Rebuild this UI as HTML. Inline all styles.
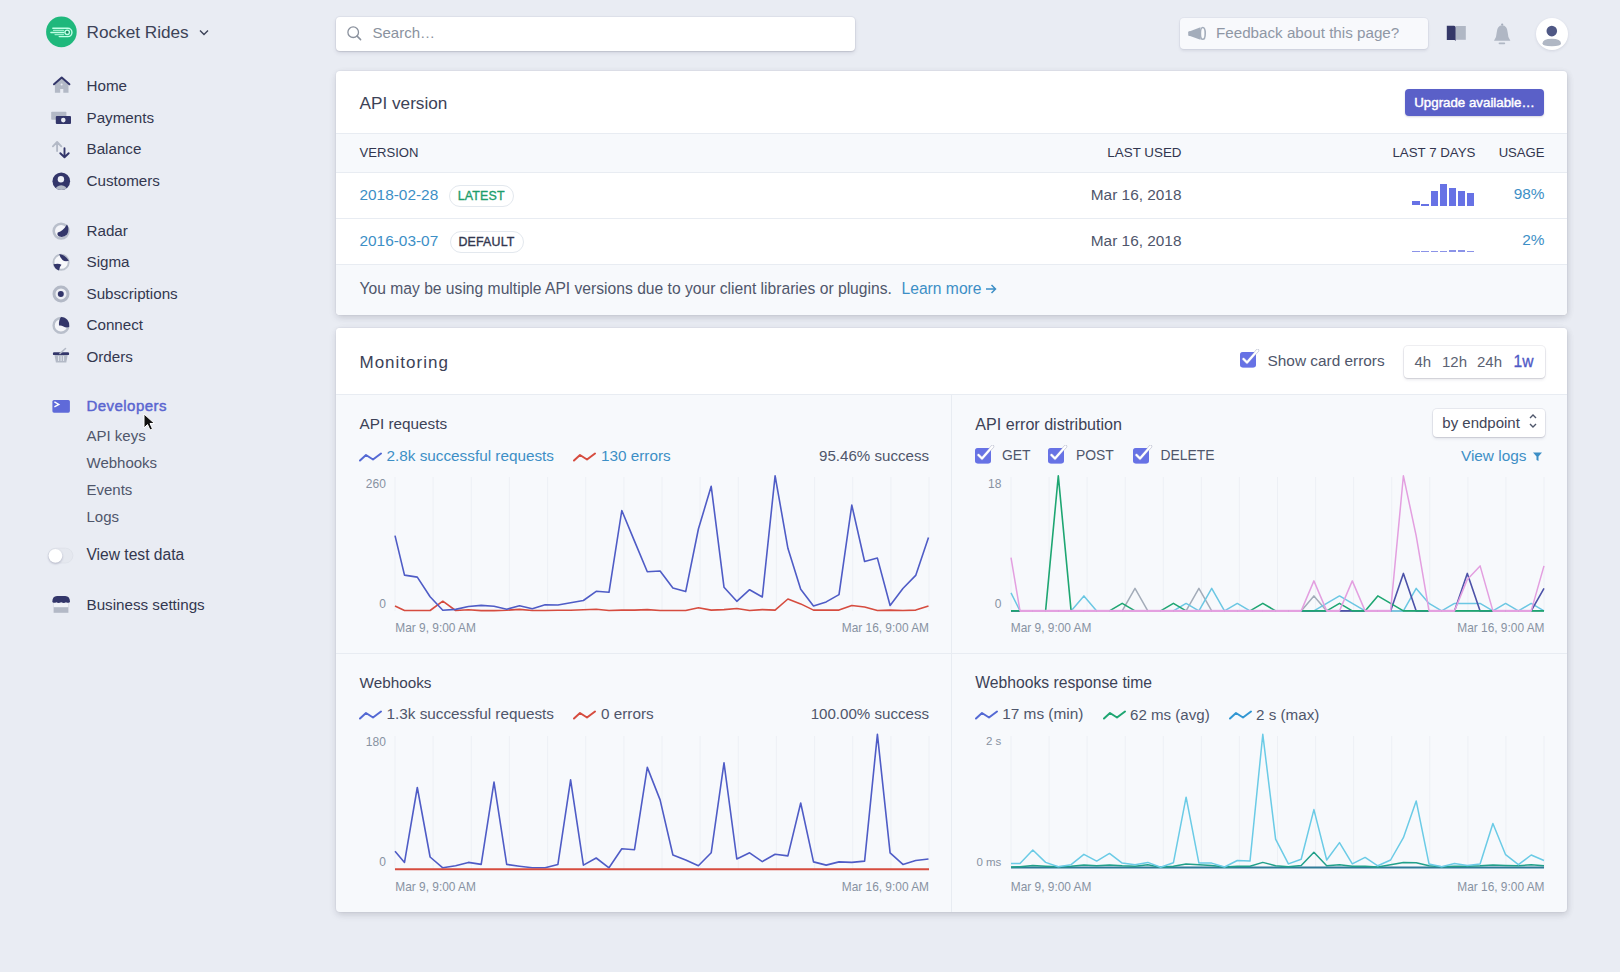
<!DOCTYPE html>
<html><head><meta charset="utf-8"><title>Developers</title>
<style>
html,body{margin:0;padding:0;}
body{width:1620px;height:972px;position:relative;overflow:hidden;background:#e9ecf3;font-family:"Liberation Sans", sans-serif;}
.t{position:absolute;line-height:1;white-space:nowrap;}
</style></head><body>
<svg style="position:absolute;left:44px;top:15px" width="35" height="35" viewBox="0 0 35 35">
<circle cx="17.4" cy="16.9" r="15.3" fill="#1fb87c"/>
<g stroke="#c2ffe6" fill="none" stroke-linecap="round">
<path d="M8.8 13.3 H23.8 A4.15 4.15 0 0 1 23.8 21.6 H15.2" stroke-width="1.4"/>
<path d="M9.5 15.4 H19.5" stroke-width="1.1" opacity=".75"/>
<path d="M6.9 17.5 H19.8" stroke-width="1.4"/>
<path d="M11 19.6 H19.5" stroke-width="1.1" opacity=".75"/>
<circle cx="23.2" cy="17.3" r="2.2" stroke-width="1.3" fill="#178f62"/>
</g>
</svg>
<div class="t" style="left:86.5px;top:23.6px;font-size:17.2px;color:#3c4257;font-weight:400;">Rocket Rides</div>
<svg style="position:absolute;left:198px;top:28px" width="12" height="9" viewBox="0 0 12 9"><path d="M2 2.5 L6 6.5 L10 2.5" stroke="#3c4257" stroke-width="1.4" fill="none"/></svg>
<div class="t" style="left:86.5px;top:77.6px;font-size:15.2px;color:#33374f;font-weight:400;">Home</div>
<div class="t" style="left:86.5px;top:109.6px;font-size:15.2px;color:#33374f;font-weight:400;">Payments</div>
<div class="t" style="left:86.5px;top:141.1px;font-size:15.2px;color:#33374f;font-weight:400;">Balance</div>
<div class="t" style="left:86.5px;top:172.6px;font-size:15.2px;color:#33374f;font-weight:400;">Customers</div>
<div class="t" style="left:86.5px;top:222.6px;font-size:15.2px;color:#33374f;font-weight:400;">Radar</div>
<div class="t" style="left:86.5px;top:254.1px;font-size:15.2px;color:#33374f;font-weight:400;">Sigma</div>
<div class="t" style="left:86.5px;top:285.6px;font-size:15.2px;color:#33374f;font-weight:400;">Subscriptions</div>
<div class="t" style="left:86.5px;top:317.1px;font-size:15.2px;color:#33374f;font-weight:400;">Connect</div>
<div class="t" style="left:86.5px;top:348.6px;font-size:15.2px;color:#33374f;font-weight:400;">Orders</div>
<div class="t" style="left:86.5px;top:398.1px;font-size:15px;color:#5a65d0;font-weight:400;-webkit-text-stroke:0.45px #5a65d0;letter-spacing:0.45px;">Developers</div>
<div class="t" style="left:86.5px;top:427.8px;font-size:15px;color:#4f566b;font-weight:400;">API keys</div>
<div class="t" style="left:86.5px;top:454.8px;font-size:15px;color:#4f566b;font-weight:400;">Webhooks</div>
<div class="t" style="left:86.5px;top:481.8px;font-size:15px;color:#4f566b;font-weight:400;">Events</div>
<div class="t" style="left:86.5px;top:508.8px;font-size:15px;color:#4f566b;font-weight:400;">Logs</div>
<div class="t" style="left:86.5px;top:546.5px;font-size:15.6px;color:#33374f;font-weight:400;">View test data</div>
<div class="t" style="left:86.5px;top:596.6px;font-size:15.2px;color:#33374f;font-weight:400;">Business settings</div>
<svg style="position:absolute;left:0;top:0" width="330" height="640"><path d="M54.9 84 L61.7 77.9 L68.5 84 V92.7 H63.3 V89 H60.2 V92.7 H54.9Z" fill="#b3b9c6"/><path d="M54 84.3 L61.7 77.6 L69.4 84.3" stroke="#33366a" stroke-width="2" fill="none" stroke-linecap="round" stroke-linejoin="round"/><circle cx="61.6" cy="84.6" r="1" fill="#e9ecf3"/><rect x="51.2" y="111.7" width="15.2" height="8.1" rx="0.8" fill="#b3b9c6"/><rect x="55.8" y="116" width="15.2" height="8.1" rx="1" fill="#33366a"/><circle cx="63.3" cy="120.1" r="2.3" fill="#e9ecf3"/><path d="M57.1 151.1 V142.2 M52.9 146.3 L57.1 142 L61.3 146.3" stroke="#b3b9c6" stroke-width="1.9" fill="none" stroke-linecap="round" stroke-linejoin="round"/><path d="M64.5 148.3 V157 M60.3 153.2 L64.5 157.3 L68.7 153.2" stroke="#33366a" stroke-width="1.9" fill="none" stroke-linecap="round" stroke-linejoin="round"/><clipPath id="cc"><circle cx="61.3" cy="181.2" r="8.8"/></clipPath><circle cx="61.3" cy="181.2" r="8.8" fill="#33366a"/><circle cx="60.9" cy="179.2" r="3.2" fill="#eef0f7"/><ellipse cx="61.2" cy="190.5" rx="6" ry="5.2" fill="#b3b9c6" clip-path="url(#cc)"/><circle cx="61.1" cy="231.1" r="7.4" fill="#f4f5f9" stroke="#b9bfcb" stroke-width="2.6"/><path d="M67 224.6 Q70 229.5 67 234.5 Q63.5 238 59.3 236.5 Q56.5 235 57.8 232.5 Q60.5 231.5 62.5 230 Q65 228 67 224.6Z" fill="#33366a"/><circle cx="61.1" cy="262.2" r="7.6" fill="#f7f8fb" stroke="#bcc2cd" stroke-width="1.9"/><path d="M59.3 254 Q65 254.5 68.9 260.8 Q65 262 62.5 260 Q59.8 257.5 59.3 254Z" fill="#33366a"/><path d="M53.5 264.3 Q58.5 263 61.5 264.8 Q59.3 267 59 270.6 Q54.5 269 53.5 264.3Z" fill="#33366a"/><circle cx="61" cy="293.9" r="7" fill="#eef0f5" stroke="#b3b9c6" stroke-width="3"/><circle cx="60.8" cy="293.9" r="3" fill="#33366a"/><circle cx="61" cy="325.4" r="7.4" fill="#f4f5f9" stroke="#b9bfcb" stroke-width="2.4"/><path d="M61 317 A8.4 8.4 0 0 1 69.2 327 Q66 328 63.5 326.5 Q61.2 325 59 325.5 Q58.5 320 61 317Z" fill="#33366a"/><path d="M54.5 355 H67.7 L66.3 362.4 H55.9Z" fill="#b3b9c6"/><path d="M58.6 356 V361 M61.1 356 V361 M63.6 356 V361" stroke="#e9ecf3" stroke-width="0.9"/><rect x="52.9" y="352.2" width="16.2" height="2.9" rx="1.2" fill="#33366a"/><path d="M60 353.5 L65.5 348.5" stroke="#b3b9c6" stroke-width="1.6" stroke-linecap="round"/></svg>
<svg style="position:absolute;left:0;top:380px" width="100" height="250"><rect x="52.4" y="19.9" width="17.5" height="12.8" rx="1.6" fill="#5f6ad9"/><path d="M54.4 21.9 L58.8 24.4 L54.4 26.8" stroke="#fff" stroke-width="1.4" fill="none"/><rect x="48.2" y="168.2" width="24.7" height="14.8" rx="7.4" fill="#e5e8ef" stroke="#dde1e9" stroke-width="0.8"/><circle cx="55.4" cy="175.8" r="6.9" fill="#fff" style="filter:drop-shadow(0 1px 1.2px rgba(50,50,93,.3))"/><rect x="53.6" y="222" width="14.8" height="10.8" fill="#b3b9c6"/><rect x="53.6" y="222" width="14.8" height="5.2" fill="#f1f3f8"/><path d="M52.3 222 Q52.3 216 57 216 H65.3 Q70 216 70 222 Q68 223.6 66 222.2 Q64 223.8 61.2 222.2 Q58.4 223.8 56.3 222.2 Q54.3 223.6 52.3 222Z" fill="#33366a"/></svg>
<svg style="position:absolute;left:143px;top:413px" width="14" height="20" viewBox="0 0 14 20"><path d="M1 1 L1 15 L4.5 11.5 L7 17 L9.5 16 L7 10.5 L11.5 10.5 Z" fill="#111" stroke="#fff" stroke-width="1"/></svg>
<div style="position:absolute;left:336px;top:16.5px;width:519px;height:34px;background:#fff;border-radius:4px;box-shadow:0 0 0 1px rgba(50,50,93,.05),0 2px 4px rgba(50,50,93,.12),0 1px 1.5px rgba(0,0,0,.08)"></div>
<svg style="position:absolute;left:346px;top:25px" width="17" height="17" viewBox="0 0 17 17"><circle cx="7.2" cy="7.2" r="5.3" stroke="#8a919d" stroke-width="1.3" fill="none"/><path d="M11.1 11.1 L14.6 14.6" stroke="#8a919d" stroke-width="1.5" stroke-linecap="round"/></svg>
<div class="t" style="left:372.5px;top:24.8px;font-size:15px;color:#8a929e;font-weight:400;">Search…</div>
<div style="position:absolute;left:1179.5px;top:17.5px;width:248px;height:31.5px;background:#f8f9fc;border-radius:4px;box-shadow:0 0 0 1px rgba(50,50,93,.04),0 2px 3px rgba(50,50,93,.1)"></div>
<svg style="position:absolute;left:1180px;top:20px" width="32" height="26"><path d="M9.3 11.4 L20.5 7.2 V19.8 L9.3 15.8Z" fill="#a4adbb"/><rect x="8.2" y="11.2" width="2.5" height="4.8" rx="1" fill="#a4adbb"/><ellipse cx="22.8" cy="13.4" rx="2.4" ry="5.9" fill="#fafbfd" stroke="#a4adbb" stroke-width="1.6"/></svg>
<div class="t" style="left:1216.0px;top:25.4px;font-size:15.2px;color:#8f97a5;font-weight:400;">Feedback about this page?</div>
<svg style="position:absolute;left:1440px;top:18px" width="30" height="28"><path d="M6.8 7.7 H14 Q15.7 7.7 15.7 9.5 V23 L14.6 22 H6.8Z" fill="#353868"/><path d="M15.9 8 H25.8 V21.8 H15.9Z" fill="#b0b7c4"/></svg>
<svg style="position:absolute;left:1490px;top:18px" width="24" height="30"><path d="M12.2 7.3 Q17.2 7.8 17.6 14 Q17.8 19.5 20.4 22.8 H4 Q6.6 19.5 6.8 14 Q7.2 7.8 12.2 7.3Z" fill="#b0b7c4"/><circle cx="12.2" cy="6.5" r="1.1" fill="#a4adbb"/><path d="M9.5 25.3 H14.3" stroke="#b0b7c4" stroke-width="1.8" stroke-linecap="round"/></svg>
<div style="position:absolute;left:1535.5px;top:17.5px;width:32px;height:32px;background:#fff;border-radius:50%;box-shadow:0 1px 3px rgba(50,50,93,.12)"></div>
<svg style="position:absolute;left:1535.5px;top:17.5px" width="32" height="32" viewBox="0 0 32 32"><circle cx="15.8" cy="13.1" r="5.3" fill="#4f5885"/><path d="M6.5 25.5 Q6.5 20.8 15.8 20.8 Q25 20.8 25 25.5 Q25 28.2 15.8 28.2 Q6.5 28.2 6.5 25.5Z" fill="#b0b7c4"/></svg>
<div style="position:absolute;left:336px;top:71px;width:1231px;height:243.5px;background:#fff;border-radius:4px;overflow:hidden;box-shadow:0 0 0 1px rgba(50,50,93,.03),1px 2px 6px rgba(0,0,0,.1),0 3px 9px rgba(50,50,93,.08)"></div>
<div class="t" style="left:359.5px;top:94.6px;font-size:17.2px;color:#3c4257;font-weight:400;">API version</div>
<div style="position:absolute;left:1405px;top:89px;width:139px;height:26.5px;background:#5a60c8;border-radius:4px;box-shadow:0 1px 2px rgba(50,50,93,.2)"></div>
<div class="t" style="left:1474.5px;top:95.5px;font-size:13.3px;color:#fff;font-weight:400;transform:translateX(-50%);-webkit-text-stroke:0.45px #fff;">Upgrade available…</div>
<div style="position:absolute;left:336px;top:132.5px;width:1231px;height:40px;background:#f7f9fc;border-top:1px solid #e8ecf2;border-bottom:1px solid #e8ecf2;box-sizing:border-box"></div>
<div class="t" style="left:359.5px;top:146.2px;font-size:13.1px;color:#32364f;font-weight:400;">VERSION</div>
<div class="t" style="right:438.5px;top:145.9px;font-size:13.4px;color:#32364f;font-weight:400;">LAST USED</div>
<div class="t" style="right:144.5px;top:146.0px;font-size:13.3px;color:#32364f;font-weight:400;">LAST 7 DAYS</div>
<div class="t" style="right:75.5px;top:146.2px;font-size:13.1px;color:#32364f;font-weight:400;">USAGE</div>
<div style="position:absolute;left:336px;top:218px;width:1231px;height:1px;background:#e8ecf2"></div>
<div style="position:absolute;left:336px;top:264px;width:1231px;height:1px;background:#e8ecf2"></div>
<div class="t" style="left:359.5px;top:187.2px;font-size:15.4px;color:#3d8fc6;font-weight:400;">2018-02-28</div>
<div style="position:absolute;left:449px;top:185px;width:64.5px;height:22px;border:1px solid #e3e8ee;border-radius:11px;box-sizing:border-box;background:#fff"></div>
<div class="t" style="left:481.2px;top:189.7px;font-size:12.4px;color:#1d9d6c;font-weight:400;transform:translateX(-50%);-webkit-text-stroke:0.35px #1d9d6c;letter-spacing:0.2px;">LATEST</div>
<div class="t" style="left:359.5px;top:233.2px;font-size:15.4px;color:#3d8fc6;font-weight:400;">2016-03-07</div>
<div style="position:absolute;left:449.5px;top:231px;width:74px;height:22px;border:1px solid #e3e8ee;border-radius:11px;box-sizing:border-box;background:#fff"></div>
<div class="t" style="left:486.5px;top:235.7px;font-size:12.4px;color:#33374f;font-weight:400;transform:translateX(-50%);-webkit-text-stroke:0.35px #33374f;letter-spacing:0.2px;">DEFAULT</div>
<div class="t" style="right:438.5px;top:187.2px;font-size:15.4px;color:#4f566b;font-weight:400;">Mar 16, 2018</div>
<div class="t" style="right:438.5px;top:233.2px;font-size:15.4px;color:#4f566b;font-weight:400;">Mar 16, 2018</div>
<div class="t" style="right:75.5px;top:186.4px;font-size:15.4px;color:#3d8fc6;font-weight:400;">98%</div>
<div class="t" style="right:75.5px;top:232.4px;font-size:15.4px;color:#3d8fc6;font-weight:400;">2%</div>
<div style="position:absolute;left:1412.3px;top:200.8px;width:7.5px;height:4.7px;background:#6772e5"></div>
<div style="position:absolute;left:1421.4px;top:203.5px;width:7.5px;height:2px;background:#6772e5"></div>
<div style="position:absolute;left:1430.5px;top:190.5px;width:7.5px;height:15px;background:#6772e5"></div>
<div style="position:absolute;left:1439.6px;top:183.5px;width:7.5px;height:22px;background:#6772e5"></div>
<div style="position:absolute;left:1448.7px;top:187.5px;width:7.5px;height:18px;background:#6772e5"></div>
<div style="position:absolute;left:1457.8px;top:190.5px;width:7.5px;height:15px;background:#6772e5"></div>
<div style="position:absolute;left:1466.9px;top:192.5px;width:7.5px;height:13px;background:#6772e5"></div>
<div style="position:absolute;left:1412.3px;top:250.7px;width:7.5px;height:1.3px;background:#8b93e8"></div>
<div style="position:absolute;left:1421.4px;top:250.7px;width:7.5px;height:1.3px;background:#8b93e8"></div>
<div style="position:absolute;left:1430.5px;top:250.7px;width:7.5px;height:1.3px;background:#8b93e8"></div>
<div style="position:absolute;left:1439.6px;top:250.7px;width:7.5px;height:1.3px;background:#8b93e8"></div>
<div style="position:absolute;left:1448.7px;top:250px;width:7.5px;height:2px;background:#8b93e8"></div>
<div style="position:absolute;left:1457.8px;top:250px;width:7.5px;height:2px;background:#8b93e8"></div>
<div style="position:absolute;left:1466.9px;top:250.7px;width:7.5px;height:1.3px;background:#8b93e8"></div>
<div style="position:absolute;left:336px;top:265px;width:1231px;height:49.5px;background:#f7f9fc;border-radius:0 0 4px 4px"></div>
<div class="t" style="left:359.5px;top:280.7px;font-size:15.65px;color:#4f566b;font-weight:400;">You may be using multiple API versions due to your client libraries or plugins.</div>
<div class="t" style="left:901.5px;top:280.7px;font-size:15.65px;color:#3d8fc6;font-weight:400;">Learn more</div>
<svg style="position:absolute;left:984px;top:282px" width="14" height="14" viewBox="0 0 14 14"><path d="M2 7 H11.5 M7.5 3 L11.5 7 L7.5 11" stroke="#3d8fc6" stroke-width="1.5" fill="none"/></svg>
<div style="position:absolute;left:336px;top:327.5px;width:1231px;height:584.5px;background:#f7f9fc;border-radius:4px;overflow:hidden;box-shadow:0 0 0 1px rgba(50,50,93,.03),1px 2px 6px rgba(0,0,0,.1),0 3px 9px rgba(50,50,93,.08)"></div>
<div style="position:absolute;left:336px;top:327.5px;width:1231px;height:66.5px;background:#fff;border-radius:4px 4px 0 0;border-bottom:1px solid #e8ecf2;box-sizing:content-box"></div>
<div class="t" style="left:359.5px;top:353.8px;font-size:17px;color:#3c4257;font-weight:400;letter-spacing:1.0px;">Monitoring</div>
<svg style="position:absolute;left:1240px;top:349px" width="20" height="19" viewBox="0 0 20 19"><rect x="0" y="3" width="16" height="15.5" rx="3" fill="#6772e5"/><path d="M3.5 10 L7 13.5 L17.5 1.5" stroke="#aeb2c6" stroke-width="3.4" fill="none" stroke-linecap="round" stroke-linejoin="round" opacity=".8"/><rect x="0" y="3" width="16" height="15.5" rx="3" fill="#6772e5" opacity=".55"/><path d="M3.5 10 L7 13.5 L17.5 1.5" stroke="#fff" stroke-width="2.2" fill="none" stroke-linecap="round" stroke-linejoin="round"/></svg>
<div class="t" style="left:1267.5px;top:352.9px;font-size:15.4px;color:#4f566b;font-weight:400;">Show card errors</div>
<div style="position:absolute;left:1404px;top:345.5px;width:140.5px;height:32.5px;background:#fff;border-radius:4px;box-shadow:0 0 0 1px rgba(50,50,93,.08),0 2px 3px rgba(50,50,93,.1),0 1px 1px rgba(0,0,0,.06)"></div>
<div class="t" style="left:1414.5px;top:354.1px;font-size:15px;color:#5b6273;font-weight:400;">4h</div>
<div class="t" style="left:1442.0px;top:354.1px;font-size:15px;color:#5b6273;font-weight:400;">12h</div>
<div class="t" style="left:1477.0px;top:354.1px;font-size:15px;color:#5b6273;font-weight:400;">24h</div>
<div class="t" style="left:1513.5px;top:353.5px;font-size:15.6px;color:#5059c6;font-weight:400;-webkit-text-stroke:0.3px #5059c6;">1w</div>
<div style="position:absolute;left:951px;top:394.5px;width:1px;height:517.5px;background:#e8ecf2"></div>
<div style="position:absolute;left:336px;top:652.5px;width:1231px;height:1px;background:#e8ecf2"></div>
<div class="t" style="left:359.5px;top:416.3px;font-size:15.3px;color:#3c4257;font-weight:400;">API requests</div>
<svg style="position:absolute;left:359px;top:451.5px" width="23" height="10" viewBox="0 0 23 10"><path d="M1 8.5 L7 3 L14 7.5 L22 1.5" stroke="#5469d4" stroke-width="2" fill="none" stroke-linecap="round" stroke-linejoin="round"/></svg>
<div class="t" style="left:386.5px;top:447.7px;font-size:15.3px;color:#3d8fc6;font-weight:400;">2.8k successful requests</div>
<svg style="position:absolute;left:573px;top:451.5px" width="23" height="10" viewBox="0 0 23 10"><path d="M1 8.5 L7 3 L14 7.5 L22 1.5" stroke="#d64c3f" stroke-width="2" fill="none" stroke-linecap="round" stroke-linejoin="round"/></svg>
<div class="t" style="left:601.0px;top:447.7px;font-size:15.3px;color:#3d8fc6;font-weight:400;">130 errors</div>
<div class="t" style="right:691.0px;top:447.9px;font-size:15.1px;color:#4f566b;font-weight:400;">95.46% success</div>
<div class="t" style="right:1234.2px;top:477.6px;font-size:12px;color:#8792a2;font-weight:400;">260</div>
<div class="t" style="right:1234.2px;top:597.6px;font-size:12px;color:#8792a2;font-weight:400;">0</div>
<div class="t" style="left:395.3px;top:623.3px;font-size:11.9px;color:#8792a2;font-weight:400;">Mar 9, 9:00 AM</div>
<div class="t" style="right:691.0px;top:623.3px;font-size:11.9px;color:#8792a2;font-weight:400;">Mar 16, 9:00 AM</div>
<svg style="position:absolute;left:0;top:0;overflow:visible" width="1620" height="972"><line x1="395.0" y1="477" x2="395.0" y2="611" stroke="#edf0f5" stroke-width="1"/><line x1="433.1" y1="477" x2="433.1" y2="611" stroke="#edf0f5" stroke-width="1"/><line x1="471.3" y1="477" x2="471.3" y2="611" stroke="#edf0f5" stroke-width="1"/><line x1="509.4" y1="477" x2="509.4" y2="611" stroke="#edf0f5" stroke-width="1"/><line x1="547.6" y1="477" x2="547.6" y2="611" stroke="#edf0f5" stroke-width="1"/><line x1="585.7" y1="477" x2="585.7" y2="611" stroke="#edf0f5" stroke-width="1"/><line x1="623.9" y1="477" x2="623.9" y2="611" stroke="#edf0f5" stroke-width="1"/><line x1="662.0" y1="477" x2="662.0" y2="611" stroke="#edf0f5" stroke-width="1"/><line x1="700.1" y1="477" x2="700.1" y2="611" stroke="#edf0f5" stroke-width="1"/><line x1="738.3" y1="477" x2="738.3" y2="611" stroke="#edf0f5" stroke-width="1"/><line x1="776.4" y1="477" x2="776.4" y2="611" stroke="#edf0f5" stroke-width="1"/><line x1="814.6" y1="477" x2="814.6" y2="611" stroke="#edf0f5" stroke-width="1"/><line x1="852.7" y1="477" x2="852.7" y2="611" stroke="#edf0f5" stroke-width="1"/><line x1="890.9" y1="477" x2="890.9" y2="611" stroke="#edf0f5" stroke-width="1"/><line x1="929.0" y1="477" x2="929.0" y2="611" stroke="#edf0f5" stroke-width="1"/><polyline points="395.0,606.0 404.5,610.5 417.3,610.5 430.1,610.5 442.8,601.2 455.6,610.5 468.4,609.7 481.2,610.6 494.0,610.6 506.7,610.2 519.5,609.4 532.3,610.5 545.1,610.5 557.9,610.3 570.6,610.3 583.4,609.8 596.2,609.3 609.0,610.5 621.8,610.1 634.5,610.1 647.3,609.6 660.1,610.5 672.9,610.5 685.7,610.5 698.4,607.8 711.2,610.1 724.0,609.6 736.8,608.5 749.6,610.5 762.3,609.6 775.1,610.1 787.9,599.0 800.7,603.9 813.5,610.1 826.2,610.1 839.0,610.1 851.8,605.5 864.6,607.0 877.4,610.5 890.1,610.1 902.9,610.5 915.7,610.1 928.5,605.9" stroke="#d64c3f" stroke-width="1.6" fill="none" stroke-linejoin="round"/><polyline points="395.0,535.6 404.5,575.1 417.3,577.1 430.1,596.8 442.8,610.2 455.6,609.4 468.4,606.5 481.2,605.4 494.0,606.2 506.7,609.2 519.5,605.7 532.3,608.7 545.1,604.7 557.9,605.0 570.6,602.7 583.4,600.5 596.2,591.3 609.0,592.3 621.8,510.5 634.5,541.1 647.3,571.8 660.1,571.0 672.9,588.0 685.7,591.6 698.4,529.0 711.2,486.3 724.0,587.2 736.8,601.3 749.6,589.7 762.3,597.0 775.1,475.8 787.9,548.3 800.7,589.2 813.5,605.9 826.2,601.9 839.0,594.6 851.8,505.1 864.6,561.5 877.4,558.1 890.1,605.5 902.9,588.5 915.7,575.4 928.5,537.5" stroke="#4f5cc6" stroke-width="1.6" fill="none" stroke-linejoin="round"/></svg>
<div class="t" style="left:975.3px;top:415.9px;font-size:16.1px;color:#3c4257;font-weight:400;">API error distribution</div>
<div style="position:absolute;left:1432.5px;top:408.5px;width:112px;height:28px;background:#fff;border-radius:4px;box-shadow:0 0 0 1px rgba(50,50,93,.08),0 2px 3px rgba(50,50,93,.1),0 1px 1px rgba(0,0,0,.06)"></div>
<div class="t" style="left:1442.3px;top:415.2px;font-size:15px;color:#3f4558;font-weight:400;">by endpoint</div>
<svg style="position:absolute;left:1528px;top:413px" width="10" height="16" viewBox="0 0 10 16"><path d="M2 5 L5 2 L8 5 M2 11 L5 14 L8 11" stroke="#4f566b" stroke-width="1.4" fill="none"/></svg>
<svg style="position:absolute;left:974.5px;top:445px" width="20" height="19" viewBox="0 0 20 19"><rect x="0" y="3" width="16" height="15.5" rx="3" fill="#6772e5"/><path d="M3.5 10 L7 13.5 L17.5 1.5" stroke="#aeb2c6" stroke-width="3.4" fill="none" stroke-linecap="round" stroke-linejoin="round" opacity=".8"/><rect x="0" y="3" width="16" height="15.5" rx="3" fill="#6772e5" opacity=".55"/><path d="M3.5 10 L7 13.5 L17.5 1.5" stroke="#fff" stroke-width="2.2" fill="none" stroke-linecap="round" stroke-linejoin="round"/></svg>
<div class="t" style="left:1002.0px;top:448.9px;font-size:13.9px;color:#4f566b;font-weight:400;">GET</div>
<svg style="position:absolute;left:1048px;top:445px" width="20" height="19" viewBox="0 0 20 19"><rect x="0" y="3" width="16" height="15.5" rx="3" fill="#6772e5"/><path d="M3.5 10 L7 13.5 L17.5 1.5" stroke="#aeb2c6" stroke-width="3.4" fill="none" stroke-linecap="round" stroke-linejoin="round" opacity=".8"/><rect x="0" y="3" width="16" height="15.5" rx="3" fill="#6772e5" opacity=".55"/><path d="M3.5 10 L7 13.5 L17.5 1.5" stroke="#fff" stroke-width="2.2" fill="none" stroke-linecap="round" stroke-linejoin="round"/></svg>
<div class="t" style="left:1076.0px;top:448.9px;font-size:13.9px;color:#4f566b;font-weight:400;">POST</div>
<svg style="position:absolute;left:1133px;top:445px" width="20" height="19" viewBox="0 0 20 19"><rect x="0" y="3" width="16" height="15.5" rx="3" fill="#6772e5"/><path d="M3.5 10 L7 13.5 L17.5 1.5" stroke="#aeb2c6" stroke-width="3.4" fill="none" stroke-linecap="round" stroke-linejoin="round" opacity=".8"/><rect x="0" y="3" width="16" height="15.5" rx="3" fill="#6772e5" opacity=".55"/><path d="M3.5 10 L7 13.5 L17.5 1.5" stroke="#fff" stroke-width="2.2" fill="none" stroke-linecap="round" stroke-linejoin="round"/></svg>
<div class="t" style="left:1160.5px;top:448.9px;font-size:13.9px;color:#4f566b;font-weight:400;">DELETE</div>
<div class="t" style="right:93.5px;top:447.9px;font-size:15.4px;color:#3d8fc6;font-weight:400;">View logs</div>
<svg style="position:absolute;left:1532px;top:451px" width="11" height="11" viewBox="0 0 11 11"><path d="M1 1.5 H10 L6.5 5.5 V10 L4.5 9 V5.5Z" fill="#3d8fc6"/></svg>
<div class="t" style="right:618.7px;top:477.6px;font-size:12px;color:#8792a2;font-weight:400;">18</div>
<div class="t" style="right:618.7px;top:597.6px;font-size:12px;color:#8792a2;font-weight:400;">0</div>
<div class="t" style="left:1010.8px;top:623.3px;font-size:11.9px;color:#8792a2;font-weight:400;">Mar 9, 9:00 AM</div>
<div class="t" style="right:75.5px;top:623.3px;font-size:11.9px;color:#8792a2;font-weight:400;">Mar 16, 9:00 AM</div>
<svg style="position:absolute;left:0;top:0;overflow:visible" width="1620" height="972"><line x1="1011.0" y1="477" x2="1011.0" y2="611" stroke="#edf0f5" stroke-width="1"/><line x1="1049.1" y1="477" x2="1049.1" y2="611" stroke="#edf0f5" stroke-width="1"/><line x1="1087.1" y1="477" x2="1087.1" y2="611" stroke="#edf0f5" stroke-width="1"/><line x1="1125.2" y1="477" x2="1125.2" y2="611" stroke="#edf0f5" stroke-width="1"/><line x1="1163.3" y1="477" x2="1163.3" y2="611" stroke="#edf0f5" stroke-width="1"/><line x1="1201.4" y1="477" x2="1201.4" y2="611" stroke="#edf0f5" stroke-width="1"/><line x1="1239.4" y1="477" x2="1239.4" y2="611" stroke="#edf0f5" stroke-width="1"/><line x1="1277.5" y1="477" x2="1277.5" y2="611" stroke="#edf0f5" stroke-width="1"/><line x1="1315.6" y1="477" x2="1315.6" y2="611" stroke="#edf0f5" stroke-width="1"/><line x1="1353.6" y1="477" x2="1353.6" y2="611" stroke="#edf0f5" stroke-width="1"/><line x1="1391.7" y1="477" x2="1391.7" y2="611" stroke="#edf0f5" stroke-width="1"/><line x1="1429.8" y1="477" x2="1429.8" y2="611" stroke="#edf0f5" stroke-width="1"/><line x1="1467.9" y1="477" x2="1467.9" y2="611" stroke="#edf0f5" stroke-width="1"/><line x1="1505.9" y1="477" x2="1505.9" y2="611" stroke="#edf0f5" stroke-width="1"/><line x1="1544.0" y1="477" x2="1544.0" y2="611" stroke="#edf0f5" stroke-width="1"/><polyline points="1011.0,610.9 1020.0,610.9 1032.8,610.9 1045.6,610.9 1058.3,610.9 1071.1,610.9 1083.9,610.9 1096.7,610.9 1109.5,610.9 1122.2,610.9 1135.0,588.4 1147.8,610.9 1160.6,610.9 1173.4,610.9 1186.1,610.9 1198.9,588.4 1211.7,610.9 1224.5,610.9 1237.3,610.9 1250.0,610.9 1262.8,610.9 1275.6,610.9 1288.4,610.9 1301.2,610.9 1313.9,595.9 1326.7,610.9 1339.5,610.9 1352.3,610.9 1365.1,610.9 1377.8,610.9 1390.6,610.9 1403.4,610.9 1416.2,610.9 1429.0,610.9 1441.7,610.9 1454.5,610.9 1467.3,610.9 1480.1,610.9 1492.9,610.9 1505.6,610.9 1518.4,610.9 1531.2,610.9 1544.0,610.9" stroke="#a3acb9" stroke-width="1.5" fill="none" stroke-linejoin="round"/><polyline points="1011.0,592.9 1020.0,610.9 1032.8,610.9 1045.6,610.9 1058.3,610.9 1071.1,610.9 1083.9,595.9 1096.7,610.9 1109.5,610.9 1122.2,610.9 1135.0,610.9 1147.8,610.9 1160.6,610.9 1173.4,610.9 1186.1,603.4 1198.9,610.9 1211.7,588.4 1224.5,610.9 1237.3,603.4 1250.0,610.9 1262.8,610.9 1275.6,610.9 1288.4,610.9 1301.2,610.9 1313.9,610.9 1326.7,603.4 1339.5,595.9 1352.3,603.4 1365.1,610.9 1377.8,610.9 1390.6,610.9 1403.4,610.9 1416.2,588.4 1429.0,603.4 1441.7,610.9 1454.5,603.4 1467.3,603.4 1480.1,603.4 1492.9,610.9 1505.6,603.4 1518.4,610.9 1531.2,603.4 1544.0,610.9" stroke="#6bc7e3" stroke-width="1.5" fill="none" stroke-linejoin="round"/><polyline points="1011.0,610.9 1020.0,610.9 1032.8,610.9 1045.6,610.9 1058.3,610.9 1071.1,610.9 1083.9,610.9 1096.7,610.9 1109.5,610.9 1122.2,610.9 1135.0,610.9 1147.8,610.9 1160.6,610.9 1173.4,610.9 1186.1,610.9 1198.9,610.9 1211.7,610.9 1224.5,610.9 1237.3,610.9 1250.0,610.9 1262.8,610.9 1275.6,610.9 1288.4,610.9 1301.2,610.9 1313.9,610.9 1326.7,610.9 1339.5,610.9 1352.3,610.9 1365.1,610.9 1377.8,610.9 1390.6,610.9 1403.4,573.4 1416.2,610.9 1429.0,610.9 1441.7,610.9 1454.5,610.9 1467.3,573.4 1480.1,610.9 1492.9,610.9 1505.6,610.9 1518.4,610.9 1531.2,610.9 1544.0,588.4" stroke="#4c52a8" stroke-width="1.6" fill="none" stroke-linejoin="round"/><polyline points="1011.0,610.9 1020.0,610.9 1032.8,610.9 1045.6,610.9 1058.3,475.8 1071.1,610.9 1083.9,610.9 1096.7,610.9 1109.5,610.9 1122.2,603.4 1135.0,610.9 1147.8,610.9 1160.6,610.9 1173.4,603.4 1186.1,610.9 1198.9,610.9 1211.7,610.9 1224.5,610.9 1237.3,610.9 1250.0,610.9 1262.8,603.4 1275.6,610.9 1288.4,610.9 1301.2,610.9 1313.9,610.9 1326.7,610.9 1339.5,603.4 1352.3,610.9 1365.1,610.9 1377.8,595.9 1390.6,603.4 1403.4,610.9 1416.2,610.9 1429.0,610.9 1441.7,610.9 1454.5,610.9 1467.3,610.9 1480.1,610.9 1492.9,610.9 1505.6,610.9 1518.4,610.9 1531.2,610.9 1544.0,610.9" stroke="#1ea672" stroke-width="1.6" fill="none" stroke-linejoin="round"/><polyline points="1020.0,610.9 1032.8,610.9" stroke="#e6a6e2" stroke-width="2.2" fill="none" stroke-linejoin="round"/><polyline points="1032.8,610.9 1045.6,610.9" stroke="#e6a6e2" stroke-width="2.2" fill="none" stroke-linejoin="round"/><polyline points="1045.6,610.9 1058.3,610.9" stroke="#e6a6e2" stroke-width="2.2" fill="none" stroke-linejoin="round"/><polyline points="1058.3,610.9 1071.1,610.9" stroke="#e6a6e2" stroke-width="2.2" fill="none" stroke-linejoin="round"/><polyline points="1071.1,610.9 1083.9,610.9" stroke="#e6a6e2" stroke-width="2.2" fill="none" stroke-linejoin="round"/><polyline points="1083.9,610.9 1096.7,610.9" stroke="#e6a6e2" stroke-width="2.2" fill="none" stroke-linejoin="round"/><polyline points="1096.7,610.9 1109.5,610.9" stroke="#e6a6e2" stroke-width="2.2" fill="none" stroke-linejoin="round"/><polyline points="1109.5,610.9 1122.2,610.9" stroke="#e6a6e2" stroke-width="2.2" fill="none" stroke-linejoin="round"/><polyline points="1122.2,610.9 1135.0,610.9" stroke="#e6a6e2" stroke-width="2.2" fill="none" stroke-linejoin="round"/><polyline points="1135.0,610.9 1147.8,610.9" stroke="#e6a6e2" stroke-width="2.2" fill="none" stroke-linejoin="round"/><polyline points="1147.8,610.9 1160.6,610.9" stroke="#e6a6e2" stroke-width="2.2" fill="none" stroke-linejoin="round"/><polyline points="1160.6,610.9 1173.4,610.9" stroke="#e6a6e2" stroke-width="2.2" fill="none" stroke-linejoin="round"/><polyline points="1173.4,610.9 1186.1,610.9" stroke="#e6a6e2" stroke-width="2.2" fill="none" stroke-linejoin="round"/><polyline points="1186.1,610.9 1198.9,610.9" stroke="#e6a6e2" stroke-width="2.2" fill="none" stroke-linejoin="round"/><polyline points="1198.9,610.9 1211.7,610.9" stroke="#e6a6e2" stroke-width="2.2" fill="none" stroke-linejoin="round"/><polyline points="1211.7,610.9 1224.5,610.9" stroke="#e6a6e2" stroke-width="2.2" fill="none" stroke-linejoin="round"/><polyline points="1224.5,610.9 1237.3,610.9" stroke="#e6a6e2" stroke-width="2.2" fill="none" stroke-linejoin="round"/><polyline points="1237.3,610.9 1250.0,610.9" stroke="#e6a6e2" stroke-width="2.2" fill="none" stroke-linejoin="round"/><polyline points="1250.0,610.9 1262.8,610.9" stroke="#e6a6e2" stroke-width="2.2" fill="none" stroke-linejoin="round"/><polyline points="1262.8,610.9 1275.6,610.9" stroke="#e6a6e2" stroke-width="2.2" fill="none" stroke-linejoin="round"/><polyline points="1275.6,610.9 1288.4,610.9" stroke="#e6a6e2" stroke-width="2.2" fill="none" stroke-linejoin="round"/><polyline points="1288.4,610.9 1301.2,610.9" stroke="#e6a6e2" stroke-width="2.2" fill="none" stroke-linejoin="round"/><polyline points="1326.7,610.9 1339.5,610.9" stroke="#e6a6e2" stroke-width="2.2" fill="none" stroke-linejoin="round"/><polyline points="1365.1,610.9 1377.8,610.9" stroke="#e6a6e2" stroke-width="2.2" fill="none" stroke-linejoin="round"/><polyline points="1377.8,610.9 1390.6,610.9" stroke="#e6a6e2" stroke-width="2.2" fill="none" stroke-linejoin="round"/><polyline points="1429.0,610.9 1441.7,610.9" stroke="#e6a6e2" stroke-width="2.2" fill="none" stroke-linejoin="round"/><polyline points="1441.7,610.9 1454.5,610.9" stroke="#e6a6e2" stroke-width="2.2" fill="none" stroke-linejoin="round"/><polyline points="1492.9,610.9 1505.6,610.9" stroke="#e6a6e2" stroke-width="2.2" fill="none" stroke-linejoin="round"/><polyline points="1505.6,610.9 1518.4,610.9" stroke="#e6a6e2" stroke-width="2.2" fill="none" stroke-linejoin="round"/><polyline points="1518.4,610.9 1531.2,610.9" stroke="#e6a6e2" stroke-width="2.2" fill="none" stroke-linejoin="round"/><polyline points="1011.0,557.6 1020.0,610.9 1032.8,610.9 1045.6,610.9 1058.3,610.9 1071.1,610.9 1083.9,610.9 1096.7,610.9 1109.5,610.9 1122.2,610.9 1135.0,610.9 1147.8,610.9 1160.6,610.9 1173.4,610.9 1186.1,610.9 1198.9,610.9 1211.7,610.9 1224.5,610.9 1237.3,610.9 1250.0,610.9 1262.8,610.9 1275.6,610.9 1288.4,610.9 1301.2,610.9 1313.9,580.9 1326.7,610.9 1339.5,610.9 1352.3,580.9 1365.1,610.9 1377.8,610.9 1390.6,610.9 1403.4,475.8 1416.2,535.8 1429.0,610.9 1441.7,610.9 1454.5,610.9 1467.3,579.4 1480.1,565.9 1492.9,610.9 1505.6,610.9 1518.4,610.9 1531.2,610.9 1544.0,565.9" stroke="#e39fe0" stroke-width="1.5" fill="none" stroke-linejoin="round"/></svg>
<div class="t" style="left:359.5px;top:674.5px;font-size:15.3px;color:#3c4257;font-weight:400;">Webhooks</div>
<svg style="position:absolute;left:359px;top:709.5px" width="23" height="10" viewBox="0 0 23 10"><path d="M1 8.5 L7 3 L14 7.5 L22 1.5" stroke="#5469d4" stroke-width="2" fill="none" stroke-linecap="round" stroke-linejoin="round"/></svg>
<div class="t" style="left:386.5px;top:706.0px;font-size:15.3px;color:#4f566b;font-weight:400;">1.3k successful requests</div>
<svg style="position:absolute;left:573px;top:709.5px" width="23" height="10" viewBox="0 0 23 10"><path d="M1 8.5 L7 3 L14 7.5 L22 1.5" stroke="#d64c3f" stroke-width="2" fill="none" stroke-linecap="round" stroke-linejoin="round"/></svg>
<div class="t" style="left:601.0px;top:706.0px;font-size:15.3px;color:#4f566b;font-weight:400;">0 errors</div>
<div class="t" style="right:691.0px;top:706.2px;font-size:15.1px;color:#4f566b;font-weight:400;">100.00% success</div>
<div class="t" style="right:1234.2px;top:736.4px;font-size:12px;color:#8792a2;font-weight:400;">180</div>
<div class="t" style="right:1234.2px;top:856.1px;font-size:12px;color:#8792a2;font-weight:400;">0</div>
<div class="t" style="left:395.3px;top:881.8px;font-size:11.9px;color:#8792a2;font-weight:400;">Mar 9, 9:00 AM</div>
<div class="t" style="right:691.0px;top:881.8px;font-size:11.9px;color:#8792a2;font-weight:400;">Mar 16, 9:00 AM</div>
<svg style="position:absolute;left:0;top:0;overflow:visible" width="1620" height="972"><line x1="395.0" y1="736" x2="395.0" y2="870" stroke="#edf0f5" stroke-width="1"/><line x1="433.1" y1="736" x2="433.1" y2="870" stroke="#edf0f5" stroke-width="1"/><line x1="471.3" y1="736" x2="471.3" y2="870" stroke="#edf0f5" stroke-width="1"/><line x1="509.4" y1="736" x2="509.4" y2="870" stroke="#edf0f5" stroke-width="1"/><line x1="547.6" y1="736" x2="547.6" y2="870" stroke="#edf0f5" stroke-width="1"/><line x1="585.7" y1="736" x2="585.7" y2="870" stroke="#edf0f5" stroke-width="1"/><line x1="623.9" y1="736" x2="623.9" y2="870" stroke="#edf0f5" stroke-width="1"/><line x1="662.0" y1="736" x2="662.0" y2="870" stroke="#edf0f5" stroke-width="1"/><line x1="700.1" y1="736" x2="700.1" y2="870" stroke="#edf0f5" stroke-width="1"/><line x1="738.3" y1="736" x2="738.3" y2="870" stroke="#edf0f5" stroke-width="1"/><line x1="776.4" y1="736" x2="776.4" y2="870" stroke="#edf0f5" stroke-width="1"/><line x1="814.6" y1="736" x2="814.6" y2="870" stroke="#edf0f5" stroke-width="1"/><line x1="852.7" y1="736" x2="852.7" y2="870" stroke="#edf0f5" stroke-width="1"/><line x1="890.9" y1="736" x2="890.9" y2="870" stroke="#edf0f5" stroke-width="1"/><line x1="929.0" y1="736" x2="929.0" y2="870" stroke="#edf0f5" stroke-width="1"/><polyline points="395.0,851.3 404.5,862.4 417.3,787.5 430.1,857.0 442.8,867.8 455.6,865.8 468.4,862.4 481.2,864.4 494.0,782.1 506.7,864.4 519.5,866.2 532.3,867.8 545.1,867.8 557.9,864.4 570.6,779.8 583.4,865.1 596.2,858.0 609.0,867.8 621.8,848.8 634.5,849.7 647.3,767.4 660.1,799.9 672.9,855.0 685.7,860.1 698.4,865.8 711.2,852.8 724.0,762.8 736.8,859.0 749.6,852.8 762.3,861.6 775.1,854.3 787.9,855.9 800.7,803.0 813.5,861.9 826.2,865.1 839.0,861.9 851.8,862.4 864.6,861.1 877.4,734.3 890.1,852.8 902.9,864.4 915.7,860.5 928.5,859.0" stroke="#4f5cc6" stroke-width="1.6" fill="none" stroke-linejoin="round"/><polyline points="395.0,869.3 929.0,869.3" stroke="#d64c3f" stroke-width="2" fill="none" stroke-linejoin="round"/></svg>
<div class="t" style="left:975.3px;top:674.5px;font-size:15.7px;color:#3c4257;font-weight:400;">Webhooks response time</div>
<svg style="position:absolute;left:974.5px;top:709.5px" width="23" height="10" viewBox="0 0 23 10"><path d="M1 8.5 L7 3 L14 7.5 L22 1.5" stroke="#5469d4" stroke-width="2" fill="none" stroke-linecap="round" stroke-linejoin="round"/></svg>
<div class="t" style="left:1002.2px;top:706.3px;font-size:15.4px;color:#4f566b;font-weight:400;">17 ms (min)</div>
<svg style="position:absolute;left:1102.5px;top:709.5px" width="23" height="10" viewBox="0 0 23 10"><path d="M1 8.5 L7 3 L14 7.5 L22 1.5" stroke="#1ea672" stroke-width="2" fill="none" stroke-linecap="round" stroke-linejoin="round"/></svg>
<div class="t" style="left:1130.0px;top:706.6px;font-size:15.1px;color:#4f566b;font-weight:400;">62 ms (avg)</div>
<svg style="position:absolute;left:1229px;top:709.5px" width="23" height="10" viewBox="0 0 23 10"><path d="M1 8.5 L7 3 L14 7.5 L22 1.5" stroke="#3297d3" stroke-width="2" fill="none" stroke-linecap="round" stroke-linejoin="round"/></svg>
<div class="t" style="left:1256.0px;top:706.5px;font-size:15.2px;color:#4f566b;font-weight:400;">2 s (max)</div>
<div class="t" style="right:618.7px;top:736.1px;font-size:11.5px;color:#8792a2;font-weight:400;">2 s</div>
<div class="t" style="right:618.7px;top:856.5px;font-size:11.5px;color:#8792a2;font-weight:400;">0 ms</div>
<div class="t" style="left:1010.8px;top:881.8px;font-size:11.9px;color:#8792a2;font-weight:400;">Mar 9, 9:00 AM</div>
<div class="t" style="right:75.5px;top:881.8px;font-size:11.9px;color:#8792a2;font-weight:400;">Mar 16, 9:00 AM</div>
<svg style="position:absolute;left:0;top:0;overflow:visible" width="1620" height="972"><line x1="1011.0" y1="736" x2="1011.0" y2="868" stroke="#edf0f5" stroke-width="1"/><line x1="1049.1" y1="736" x2="1049.1" y2="868" stroke="#edf0f5" stroke-width="1"/><line x1="1087.1" y1="736" x2="1087.1" y2="868" stroke="#edf0f5" stroke-width="1"/><line x1="1125.2" y1="736" x2="1125.2" y2="868" stroke="#edf0f5" stroke-width="1"/><line x1="1163.3" y1="736" x2="1163.3" y2="868" stroke="#edf0f5" stroke-width="1"/><line x1="1201.4" y1="736" x2="1201.4" y2="868" stroke="#edf0f5" stroke-width="1"/><line x1="1239.4" y1="736" x2="1239.4" y2="868" stroke="#edf0f5" stroke-width="1"/><line x1="1277.5" y1="736" x2="1277.5" y2="868" stroke="#edf0f5" stroke-width="1"/><line x1="1315.6" y1="736" x2="1315.6" y2="868" stroke="#edf0f5" stroke-width="1"/><line x1="1353.6" y1="736" x2="1353.6" y2="868" stroke="#edf0f5" stroke-width="1"/><line x1="1391.7" y1="736" x2="1391.7" y2="868" stroke="#edf0f5" stroke-width="1"/><line x1="1429.8" y1="736" x2="1429.8" y2="868" stroke="#edf0f5" stroke-width="1"/><line x1="1467.9" y1="736" x2="1467.9" y2="868" stroke="#edf0f5" stroke-width="1"/><line x1="1505.9" y1="736" x2="1505.9" y2="868" stroke="#edf0f5" stroke-width="1"/><line x1="1544.0" y1="736" x2="1544.0" y2="868" stroke="#edf0f5" stroke-width="1"/><polyline points="1011.0,867.5 1544.0,867.5" stroke="#2f7a98" stroke-width="1.8" fill="none" stroke-linejoin="round"/><polyline points="1011.0,867.0 1020.0,866.7 1032.8,865.5 1045.6,866.2 1058.3,866.7 1071.1,866.2 1083.9,865.1 1096.7,865.8 1109.5,865.1 1122.2,865.8 1135.0,866.2 1147.8,864.7 1160.6,867.3 1173.4,866.2 1186.1,863.9 1198.9,864.7 1211.7,865.5 1224.5,867.0 1237.3,866.2 1250.0,866.2 1262.8,862.4 1275.6,865.8 1288.4,866.7 1301.2,865.5 1313.9,852.3 1326.7,865.8 1339.5,864.7 1352.3,866.2 1365.1,866.2 1377.8,867.0 1390.6,864.7 1403.4,862.4 1416.2,862.8 1429.0,865.8 1441.7,866.7 1454.5,866.2 1467.3,866.2 1480.1,865.8 1492.9,865.1 1505.6,865.5 1518.4,865.8 1531.2,864.7 1544.0,865.8" stroke="#21a08a" stroke-width="1.5" fill="none" stroke-linejoin="round"/><polyline points="1011.0,863.6 1020.0,863.6 1032.8,850.0 1045.6,862.4 1058.3,866.7 1071.1,864.7 1083.9,854.3 1096.7,861.1 1109.5,853.4 1122.2,863.1 1135.0,864.7 1147.8,862.4 1160.6,867.3 1173.4,862.8 1186.1,797.2 1198.9,863.1 1211.7,863.1 1224.5,867.0 1237.3,860.5 1250.0,861.1 1262.8,734.3 1275.6,839.2 1288.4,863.9 1301.2,859.3 1313.9,809.6 1326.7,860.0 1339.5,842.6 1352.3,863.9 1365.1,857.4 1377.8,865.8 1390.6,860.0 1403.4,837.7 1416.2,800.9 1429.0,863.9 1441.7,866.7 1454.5,863.6 1467.3,865.5 1480.1,863.9 1492.9,823.5 1505.6,854.7 1518.4,864.7 1531.2,855.0 1544.0,860.5" stroke="#6bcbe6" stroke-width="1.5" fill="none" stroke-linejoin="round"/></svg>
</body></html>
